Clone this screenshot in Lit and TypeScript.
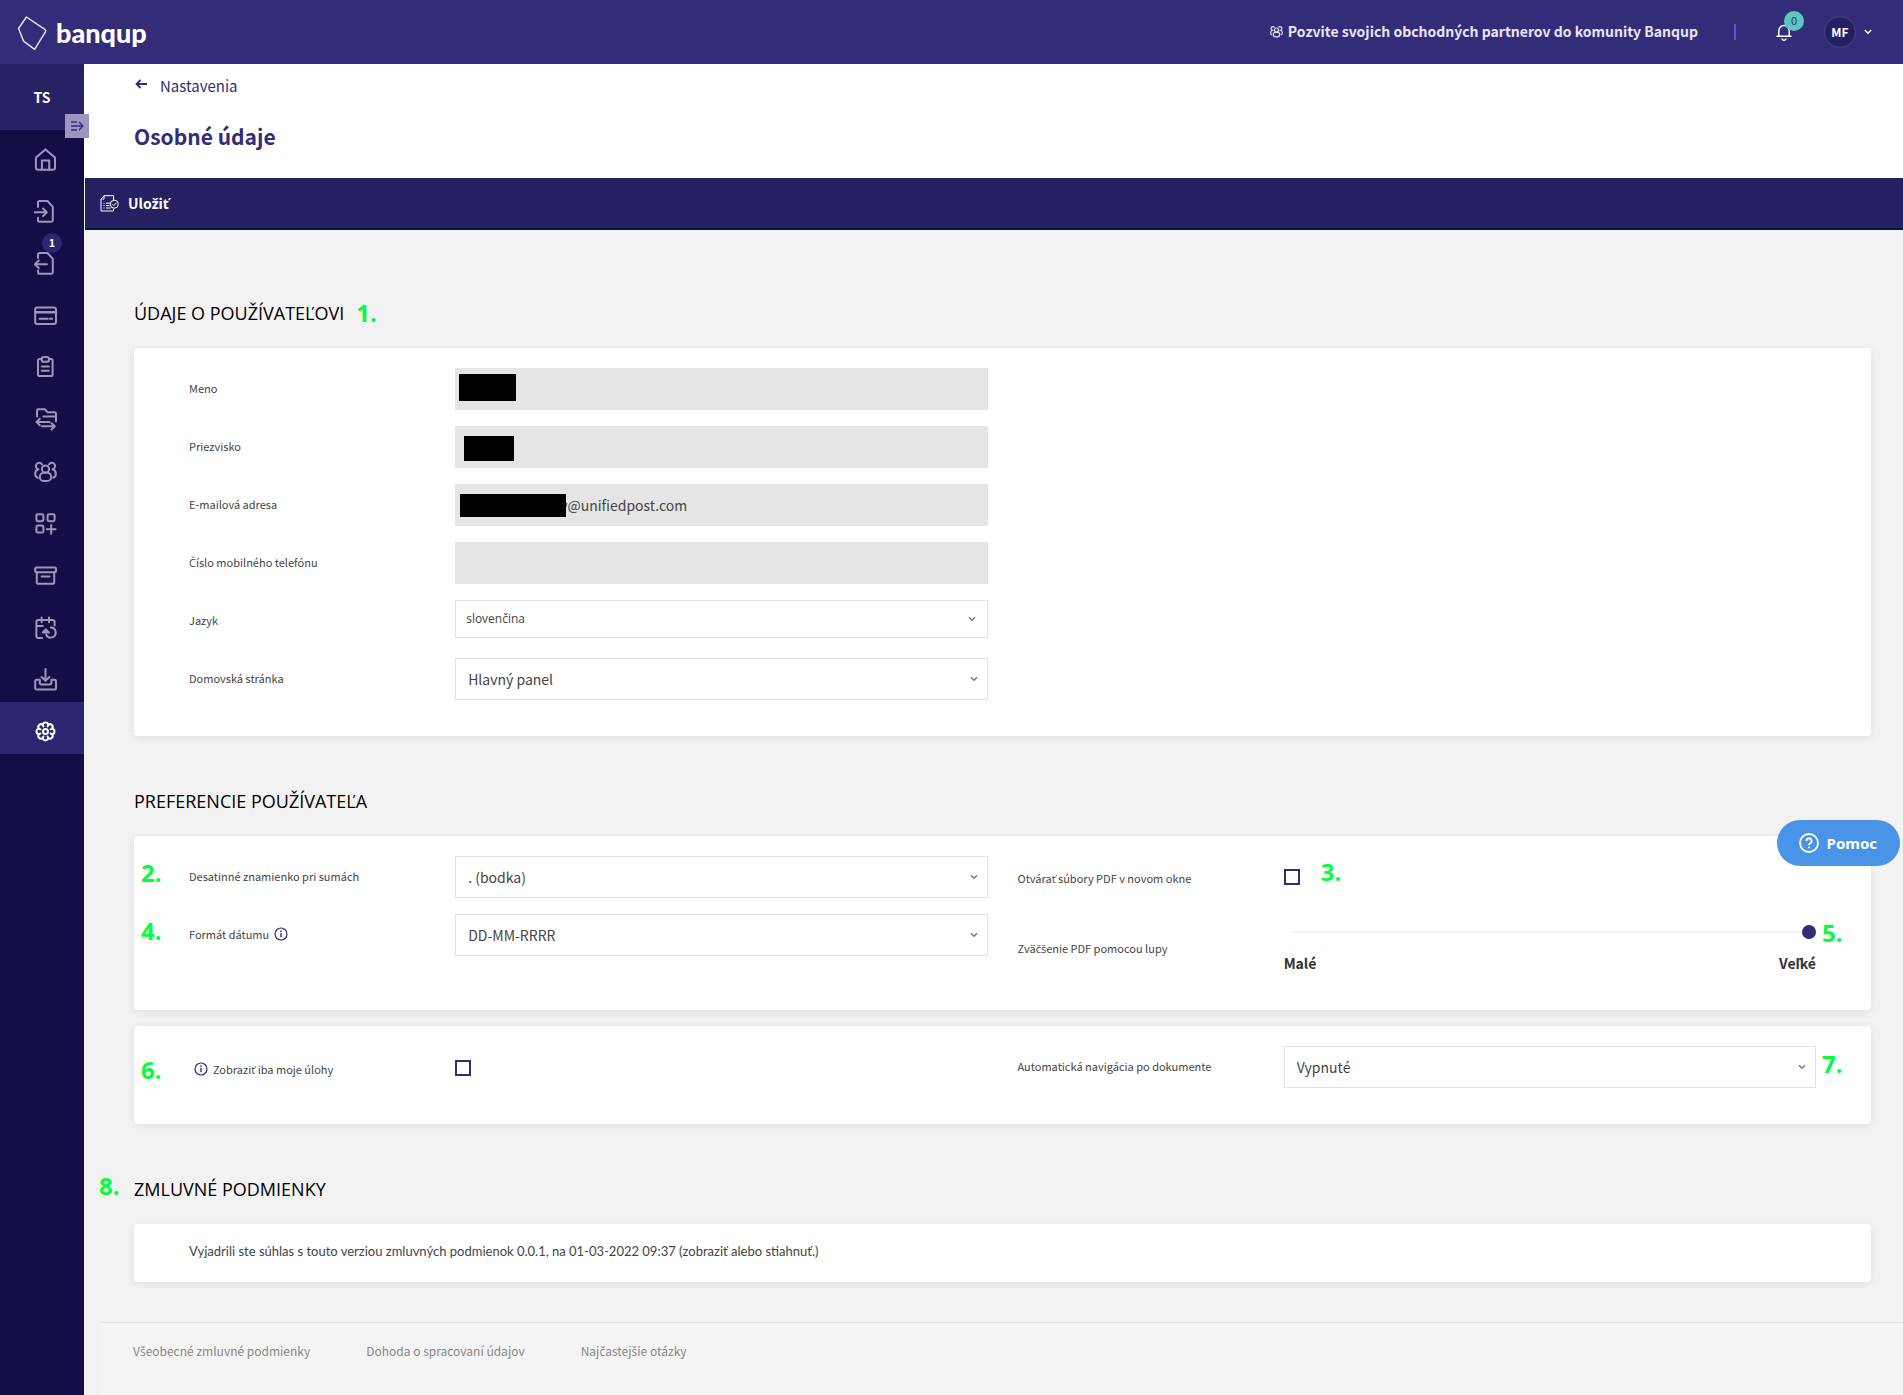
import { LitElement, html, css, svg, nothing, TemplateResult } from "lit";
import { customElement } from "lit/decorators.js";

type Shape = ReturnType<typeof svg>;

interface NavItem {
  label: string;
  icon: Shape;
  badge?: number;
  active?: boolean;
}

const NAV: NavItem[] = [
  {
    label: "Domov",
    icon: svg`<path d="M1.9 9.6 11.5 1.4 21 9.6V19.6a2.2 2.2 0 0 1-2.2 2.2H4.1a2.2 2.2 0 0 1-2.2-2.2Z"/><path d="M7.9 21.6V12.4h7.3v9.2"/>`,
  },
  {
    label: "Prijaté",
    icon: svg`<path d="M4 7V2.6a1.6 1.6 0 0 1 1.6-1.6H13.500l5.300 5.800V20.200a1.600 1.600 0 0 1-1.600 1.600H5.600a1.600 1.600 0 0 1-1.600-1.600V17.800"/><path d="M.8 12.300H12.800M9 8.500l3.800 3.800L9 16.100"/>`,
  },
  {
    label: "Odoslané",
    badge: 1,
    icon: svg`<path d="M4 6V2.600A1.600 1.600 0 0 1 5.600 1H13.500l5.300 5.800V20.200a1.600 1.600 0 0 1-1.600 1.600H5.600a1.600 1.600 0 0 1-1.600-1.600V18.500"/><path d="M13 12.300H1M4.800 8.500 1 12.300l3.800 3.800"/>`,
  },
  {
    label: "Platby",
    icon: svg`<rect x="1.200" y="3.400" width="20.800" height="16.600" rx="2"/><path d="M1.200 8.200h20.800" stroke-width="2.600"/><path d="M5.500 14.800h8M15.600 14.800h2.600"/>`,
  },
  {
    label: "Úlohy",
    icon: svg`<path d="M7.500 3H5.600A1.600 1.600 0 0 0 4 4.600V18.400A1.600 1.600 0 0 0 5.600 20H17a1.600 1.600 0 0 0 1.600-1.600V4.600A1.600 1.600 0 0 0 17 3h-1.900"/><rect x="7.600" y="1" width="7.500" height="4.800" rx="2.400"/><path d="M7.800 10.500h7M7.800 14.800h7"/>`,
  },
  {
    label: "Výmena",
    icon: svg`<path d="M3 8.500V2.500A1.200 1.200 0 0 1 4.200 1.300H11l2.600 3h7.200a1.200 1.200 0 0 1 1.200 1.200V13.500"/><path d="M9.500 8.600H22M2.500 14h13M5.800 10.800 2.500 14l3.300 3.200M8 18.300h12.800M17.500 15.200l3.300 3.100-3.300 3.200"/>`,
  },
  {
    label: "Partneri",
    icon: svg`<circle cx="11.500" cy="9" r="3.600"/><rect x="5.800" y="12.800" width="11.400" height="8.200" rx="4.100"/><path d="M8 4.400A3.300 3.300 0 1 0 4.400 9.300C2.300 9.900 1.200 11.600 1.200 14c0 2 .9 3.300 2.600 3.700M15 4.400a3.300 3.300 0 1 1 3.600 4.900c2.100.6 3.200 2.300 3.200 4.700 0 2-.9 3.300-2.600 3.700"/>`,
  },
  {
    label: "Aplikácie",
    icon: svg`<rect x="2.400" y="2.200" width="7" height="7" rx="1.400"/><rect x="13.600" y="2.200" width="7" height="7" rx="1.400"/><rect x="2.400" y="13.600" width="7" height="7" rx="1.400"/><path d="M17.200 13v8.800M12.800 17.300h8.800"/>`,
  },
  {
    label: "Archív",
    icon: svg`<rect x="1.200" y="3.400" width="20.800" height="4.800" rx="1.200"/><path d="M2.800 8.200V18.200a1.600 1.600 0 0 0 1.600 1.600H18.600a1.600 1.600 0 0 0 1.600-1.600V8.200M7.600 12.600h8"/>`,
  },
  {
    label: "Plánovanie",
    icon: svg`<path d="M8 22H4.200A1.800 1.800 0 0 1 2.400 20.200V5.800A1.800 1.800 0 0 1 4.200 4h14.600A1.800 1.800 0 0 1 20.600 5.800V9.500M2.400 10h6.400M7.600 1.600v4.600M15 1.600v4.600"/><path d="M12.200 18.800a5 5 0 1 0 4.600-7.200"/><path d="M8.800 16.400l3-3 3.200 3.200Z" fill="currentColor"/>`,
  },
  {
    label: "Stiahnuť",
    icon: svg`<path d="M11.500 1v11.600M7.600 9l3.900 3.800L15.400 9"/><path d="M5.800 11.800H2.800A1.600 1.600 0 0 0 1.200 13.400V20a1.600 1.600 0 0 0 1.600 1.600H20.400A1.600 1.600 0 0 0 22 20V13.400a1.600 1.600 0 0 0-1.600-1.600h-3v3a1.600 1.600 0 0 1-1.600 1.600H7.400a1.600 1.600 0 0 1-1.600-1.600Z"/>`,
  },
  {
    label: "Nastavenia",
    active: true,
    icon: svg`<path d="M8.710 4.660A2.850 2.850 0 0 1 14.290 4.660A2.850 2.850 0 0 1 18.240 8.610A2.850 2.850 0 0 1 18.240 14.190A2.850 2.850 0 0 1 14.290 18.140A2.850 2.850 0 0 1 8.710 18.140A2.850 2.850 0 0 1 4.760 14.190A2.850 2.850 0 0 1 4.760 8.610A2.850 2.850 0 0 1 8.710 4.660Z"/><path d="M8.710 4.660l.7 1.700M14.290 4.660l-.7 1.700M18.240 8.610l-1.700.7M18.240 14.190l-1.700-.7M14.290 18.140l-.7-1.700M8.710 18.140l.7-1.700M4.760 14.190l1.700-.7M4.760 8.610l1.700.7"/><circle cx="11.500" cy="11.400" r="2.500"/>`,
  },
];

const FOOTER_LINKS = [
  "Všeobecné zmluvné podmienky",
  "Dohoda o spracovaní údajov",
  "Najčastejšie otázky",
];

const INFO = html`<svg class="info" viewBox="0 0 14 14" role="img" aria-label="Informácia">
  <circle cx="7" cy="7" r="6" fill="none" stroke="currentColor" stroke-width="1.200" />
  <path d="M7 6v4.200M7 3.600v1.400" stroke="currentColor" stroke-width="1.400" />
</svg>`;

const CHEVRON = html`<svg class="chevron" viewBox="0 0 8 6" aria-hidden="true">
  <path d="M1 1.200 4 4.200 7 1.200" fill="none" stroke="currentColor" stroke-width="1.400" />
</svg>`;

/* The interface face has no letters with a caron; those come from the second face. */
function slovak(text: string) {
  const parts = text.split(/([čďľňšťžČĎĽŇŠŤŽ]+)/);
  return html`<span>${parts.map((part, i) => (i % 2 ? html`<span class="caron">${part}</span>` : part))}</span>`;
}

@customElement("app-root")
export class AppRoot extends LitElement {
  static styles = css`
    :host {
      display: block;
      --brand: #332c79;
      --ui: "Noto Sans CJK SC", "Noto Sans", sans-serif;
      --alt: "Open Sans", "Noto Sans", sans-serif;
      font: 14px/20px var(--ui);
      color: #444;
    }
    * {
      box-sizing: border-box;
    }
    button,
    input,
    select {
      font: inherit;
      color: inherit;
      margin: 0;
      border: 0;
      border-radius: 0;
      padding: 0;
      background: none;
    }
    a {
      color: inherit;
      text-decoration: none;
    }
    .caron {
      font-family: var(--alt);
      line-height: 1;
    }
    .page {
      min-height: 100vh;
      display: flex;
      flex-direction: column;
    }

    /* top bar */
    .topbar {
      height: 64px;
      display: flex;
      align-items: center;
      background: var(--brand);
      color: #fff;
      padding: 0 31px 0 16px;
    }
    .brand {
      display: flex;
      align-items: center;
      gap: 8px;
      padding-top: 2px;
      font: 900 27px/32px Lato, sans-serif;
    }
    .brand svg {
      width: 32px;
      height: 36px;
    }
    .invite {
      margin-left: auto;
      display: flex;
      align-items: center;
      gap: 5px;
      padding-bottom: 2px;
      font-weight: 700;
      color: #e8e6f4;
    }
    .invite svg {
      width: 13px;
      height: 13px;
    }
    .divider {
      width: 2px;
      height: 16px;
      margin: 0 40px 0 36px;
      background: #6358c6;
    }
    .bell {
      position: relative;
      display: flex;
      margin-right: 32px;
    }
    .bell svg {
      width: 16px;
      height: 18px;
    }
    .count {
      position: absolute;
      left: 8px;
      bottom: 10px;
      width: 20px;
      height: 20px;
      border-radius: 50%;
      background: #5fc6bd;
      color: #332c79;
      font-size: 11px;
      line-height: 19px;
      text-align: center;
    }
    .user {
      display: flex;
      align-items: center;
      gap: 8px;
      color: #fff;
    }
    .avatar {
      width: 32px;
      height: 32px;
      border: 1px solid #4b448c;
      border-radius: 50%;
      background: #252061;
      font-size: 12px;
      line-height: 29px;
      font-weight: 700;
      text-align: center;
    }

    /* side bar */
    .body {
      flex: 1;
      display: flex;
    }
    .side {
      position: relative;
      flex: none;
      width: 84px;
      background: #130e45;
      color: #9d97c0;
    }
    .company {
      height: 66px;
      background: #272263;
      color: #fff;
      font-weight: 700;
      line-height: 66px;
      text-align: center;
    }
    .toggle {
      position: absolute;
      left: 65px;
      top: 50px;
      width: 24px;
      height: 24px;
      display: grid;
      place-items: center;
      background: #9d97c0;
      color: var(--brand);
    }
    .toggle svg {
      width: 14px;
      height: 12px;
    }
    .nav {
      display: block;
    }
    .nav a {
      position: relative;
      display: block;
      height: 52px;
      padding: 18px 0 0 34px;
    }
    .nav a.active {
      background: #2d2670;
      color: #fff;
    }
    .nav svg {
      display: block;
      width: 24px;
      height: 24px;
      fill: none;
      stroke: currentColor;
      stroke-width: 2;
      stroke-linejoin: round;
      stroke-linecap: round;
    }
    .nav .badge {
      position: absolute;
      left: 42px;
      top: -1px;
      width: 20px;
      height: 20px;
      border-radius: 50%;
      background: #2d2670;
      color: #fff;
      font-size: 11px;
      line-height: 19px;
      font-weight: 700;
      text-align: center;
    }

    /* page head */
    .main {
      flex: 1;
      min-width: 0;
      display: flex;
      flex-direction: column;
      background: #f2f2f2;
    }
    .head {
      height: 114px;
      padding: 12px 50px 0;
      background: #fff;
      color: var(--brand);
    }
    .back {
      display: flex;
      align-items: center;
      gap: 13px;
      font-size: 15px;
      line-height: 20px;
    }
    .back svg {
      width: 13px;
      height: 14px;
    }
    h1 {
      margin: 24px 0 0;
      font-size: 21px;
      line-height: 32px;
      font-weight: 700;
    }
    .toolbar {
      height: 52px;
      margin-left: 1px;
      padding: 0 15px;
      display: flex;
      align-items: center;
      background: #252061;
      border-bottom: 2px solid #130e45;
      color: #fff;
    }
    .save {
      display: flex;
      align-items: center;
      gap: 9px;
      font-weight: 700;
    }
    .save svg {
      width: 19px;
      height: 17px;
    }

    /* sections */
    .content {
      padding: 71px 32px 40px 50px;
      display: flex;
      flex-direction: column;
      gap: 53px;
    }
    h2 {
      position: relative;
      width: max-content;
      margin: 0 0 23px;
      font: 400 18px/24px var(--alt);
      color: #000;
    }
    .stack {
      display: flex;
      flex-direction: column;
      gap: 16px;
    }
    .card {
      padding: 20px 55px 36px;
      border-radius: 4px;
      background: #fff;
      box-shadow: 0 2px 10px rgba(0, 0, 0, 0.08);
      display: grid;
      grid-template-columns: 1fr 1fr;
      gap: 30px;
      font-size: 11px;
      align-items: start;
    }
    .col {
      display: flex;
      flex-direction: column;
      gap: 16px;
    }
    .row {
      position: relative;
      display: grid;
      grid-template-columns: 1fr 2fr;
      min-height: 42px;
      align-items: center;
    }
    .row.tick {
      padding-top: 2px;
    }
    .name {
      display: flex;
      align-items: center;
      gap: 5px;
      padding-bottom: 2px;
    }
    .row.tick .name,
    .row.pdf .name {
      padding: 2px 0 0;
    }
    .row.tick .name {
      padding-left: 5px;
    }
    .info {
      flex: none;
      width: 14px;
      height: 14px;
      color: var(--brand);
    }
    .field {
      position: relative;
      height: 42px;
      font-size: 14px;
    }
    .field input {
      width: 100%;
      height: 100%;
      padding: 0 12px;
      background: #e5e5e5;
    }
    .field input.masked {
      padding-left: 105px;
    }
    .mask {
      position: absolute;
      background: #000;
    }
    .mask.first {
      left: 4px;
      top: 6px;
      width: 57px;
      height: 27px;
    }
    .mask.last {
      left: 9px;
      top: 10px;
      width: 50px;
      height: 25px;
    }
    .mask.mail {
      left: 5px;
      top: 10px;
      width: 106px;
      height: 23px;
    }
    .select {
      display: grid;
      height: 42px;
      font-size: 14px;
      align-items: center;
    }
    .select.small {
      height: 38px;
      font: 12px/20px var(--alt);
      align-self: start;
    }
    .select > * {
      grid-area: 1 / 1;
    }
    .select select {
      appearance: none;
      width: 100%;
      height: 100%;
      padding: 0 12px;
      border: 1px solid #e3e3e3;
      background: #fff;
    }
    .select.small select {
      padding: 0 10px;
    }
    .select .chevron {
      justify-self: end;
      margin-right: 10px;
      pointer-events: none;
      color: #777;
    }
    .select.small .chevron {
      margin-right: 12px;
    }
    .chevron {
      width: 8px;
      height: 6px;
    }
    .check {
      appearance: none;
      width: 16px;
      height: 16px;
      border: 2px solid var(--brand);
      background: #fff;
    }
    .check:checked {
      background: var(--brand);
    }
    .row.zoom {
      margin-top: 9px;
    }
    .scale {
      display: flex;
      flex-direction: column;
      gap: 12px;
      padding-bottom: 1px;
    }
    .scale input {
      appearance: none;
      width: 100%;
      height: 18px;
      background: linear-gradient(#f2f2f2, #f2f2f2) center / calc(100% - 16px) 2px no-repeat;
    }
    .scale input::-webkit-slider-runnable-track {
      height: 14px;
    }
    .scale input::-webkit-slider-thumb {
      appearance: none;
      width: 14px;
      height: 14px;
      border-radius: 50%;
      background: var(--brand);
    }
    .ends {
      display: flex;
      justify-content: space-between;
      font-size: 14px;
      font-weight: 700;
      color: #333;
    }
    .terms {
      display: block;
      padding: 17px 55px 21px;
      font: 13px/20px Lato, sans-serif;
    }
    .terms p {
      margin: 0;
    }

    /* numbered call-outs lying over the form */
    .mark {
      position: absolute;
      font: 700 24px/32px var(--alt);
      color: #00ff40;
    }
    .mark.before {
      left: -48px;
      top: 1px;
    }
    .row.tick .mark.before {
      top: 8px;
    }
    .mark.after {
      left: calc(100% + 6px);
      top: 2px;
    }
    .row.zoom .mark.after {
      top: -6px;
    }
    .mark.box {
      left: calc(33.333% + 37px);
      top: 0;
    }
    .mark.title-end {
      left: calc(100% + 12px);
      top: -4px;
    }
    .mark.title-start {
      left: -35px;
      top: -7px;
    }

    .foot {
      flex: 1;
      margin-left: 16px;
      padding: 18px 33px;
      display: flex;
      align-items: flex-start;
      gap: 56px;
      border-top: 1px solid #e3e3e3;
      background: #f4f4f4;
      color: #888;
      font-size: 12px;
    }
    .help {
      position: fixed;
      right: 3px;
      top: 820px;
      height: 46px;
      padding: 0 23px 0 22px;
      display: flex;
      align-items: center;
      gap: 8px;
      border-radius: 23px;
      background: #4a94e8;
      color: #fff;
      font: 700 15px/20px "Noto Sans", sans-serif;
    }
    .help svg {
      width: 20px;
      height: 20px;
    }
  `;

  private mark(n: number, place: string) {
    return html`<span class="mark ${place}">${n}.</span>`;
  }

  private text(id: string, label: string, mask?: string, value = "") {
    return html`<div class="row">
      <label class="name" for=${id}>${slovak(label)}</label>
      <div class="field">
        <input id=${id} class=${value ? "masked" : "plain"} type="text" readonly .value=${value} />
        ${mask ? html`<span class="mask ${mask}"></span>` : nothing}
      </div>
    </div>`;
  }

  private choice(id: string, label: string, value: string, extra: { small?: boolean; info?: boolean; mark?: TemplateResult } = {}) {
    return html`<div class="row">
      <label class="name" for=${id}>${slovak(label)}${extra.info ? INFO : nothing}</label>
      <div class="select ${extra.small ? "small" : ""}">
        <select id=${id}>
          <option>${value}</option>
        </select>
        ${CHEVRON}
      </div>
      ${extra.mark ?? nothing}
    </div>`;
  }

  render() {
    return html`<div class="page">
      <header class="topbar">
        <a class="brand" href="#">
          <svg viewBox="0 0 32 36" aria-hidden="true">
            <path d="M10.400 2 28.800 14.300a2 2 0 0 1 .6 2.600L18.600 34.300 7.600 26.200 2.600 13.500Z" fill="none" stroke="#e4e2f0" stroke-width="1.500" stroke-linejoin="round" />
          </svg>
          <span>banqup</span>
        </a>
        <a class="invite" href="#">
          <svg viewBox="0 0 23 23" fill="none" stroke="currentColor" stroke-width="2" aria-hidden="true">${NAV[6].icon}</svg>
          Pozvite svojich obchodných partnerov do komunity Banqup
        </a>
        <span class="divider"></span>
        <button class="bell" aria-label="Oznámenia">
          <svg viewBox="0 0 16 18" fill="none" stroke="#fff" stroke-width="1.500" aria-hidden="true">
            <path d="M1 13.200h14M2.800 13V7.800A5.200 5.200 0 0 1 13.200 7.800V13M6 16a2.200 2 0 0 0 4 0" stroke-linecap="round" />
          </svg>
          <span class="count">0</span>
        </button>
        <button class="user" aria-label="Používateľ MF">
          <span class="avatar">MF</span>
          <svg class="chevron" viewBox="0 0 8 6" fill="none" stroke="currentColor" stroke-width="1.400" aria-hidden="true"><path d="M.8 1 4 4.300 7.200 1" /></svg>
        </button>
      </header>

      <div class="body">
        <aside class="side">
          <div class="company">TS</div>
          <button class="toggle" aria-label="Rozbaliť ponuku">
            <svg viewBox="0 0 14 12" fill="none" stroke="currentColor" stroke-width="1.400" aria-hidden="true">
              <path d="M1 2h6M1 6h12M1 10h6M9 2l4 4-4 4" />
            </svg>
          </button>
          <nav class="nav">
            ${NAV.map(
              (item) => html`<a href="#" class=${item.active ? "active" : ""} aria-label=${item.label}>
                <svg viewBox="0 0 24 24" aria-hidden="true">${item.icon}</svg>
                ${item.badge ? html`<span class="badge">${item.badge}</span>` : nothing}
              </a>`,
            )}
          </nav>
        </aside>

        <main class="main">
          <div class="head">
            <a class="back" href="#">
              <svg viewBox="0 0 13 14" fill="none" stroke="currentColor" stroke-width="1.800" aria-hidden="true"><path d="M13 5H3M6.500 1 2.500 5l4 4" /></svg>
              Nastavenia
            </a>
            <h1>Osobné údaje</h1>
          </div>
          <div class="toolbar">
            <button class="save">
              <svg viewBox="0 0 19 17" fill="none" stroke="currentColor" aria-hidden="true">
                <path d="M13.500 13.500v2.500H1V4l3-3.300h9.500V5M1 4h3V.7M3.500 8.200h1M6 8.200h4.500M3.500 10.600h1M6 10.600h3.500M3.500 13h1M6 13h4.500" />
                <circle cx="14.300" cy="9.200" r="4" />
                <path d="m12.500 9.200 1.400 1.400 2.400-2.700" />
              </svg>
              ${slovak("Uložiť")}
            </button>
          </div>

          <div class="content">
            <section>
              <h2>ÚDAJE O POUŽÍVATEĽOVI${this.mark(1, "title-end")}</h2>
              <div class="card">
                <div class="col">
                  ${this.text("first", "Meno", "first")} ${this.text("last", "Priezvisko", "last")}
                  ${this.text("mail", "E-mailová adresa", "mail", "y@unifiedpost.com")}
                  ${this.text("phone", "Číslo mobilného telefónu")}
                  ${this.choice("lang", "Jazyk", "slovenčina", { small: true })}
                  ${this.choice("home", "Domovská stránka", "Hlavný panel")}
                </div>
              </div>
            </section>

            <section>
              <h2>PREFERENCIE POUŽÍVATEĽA</h2>
              <div class="stack">
                <div class="card">
                  <div class="col">
                    ${this.choice("decimal", "Desatinné znamienko pri sumách", ". (bodka)", { mark: this.mark(2, "before") })}
                    ${this.choice("date", "Formát dátumu", "DD-MM-RRRR", { info: true, mark: this.mark(4, "before") })}
                  </div>
                  <div class="col">
                    <div class="row pdf">
                      <label class="name" for="pdf">${slovak("Otvárať súbory PDF v novom okne")}</label>
                      <input id="pdf" class="check" type="checkbox" />
                      ${this.mark(3, "box")}
                    </div>
                    <div class="row zoom">
                      <label class="name" for="zoom">${slovak("Zväčšenie PDF pomocou lupy")}</label>
                      <div class="scale">
                        <input id="zoom" type="range" min="0" max="100" .value=${"100"} />
                        <div class="ends"><span>Malé</span>${slovak("Veľké")}</div>
                      </div>
                      ${this.mark(5, "after")}
                    </div>
                  </div>
                </div>
                <div class="card">
                  <div class="row tick">
                    <label class="name" for="tasks">${INFO}${slovak("Zobraziť iba moje úlohy")}</label>
                    <input id="tasks" class="check" type="checkbox" />
                    ${this.mark(6, "before")}
                  </div>
                  ${this.choice("auto", "Automatická navigácia po dokumente", "Vypnuté", { mark: this.mark(7, "after") })}
                </div>
              </div>
            </section>

            <section>
              <h2>ZMLUVNÉ PODMIENKY${this.mark(8, "title-start")}</h2>
              <div class="card terms">
                <p>Vyjadrili ste súhlas s touto verziou zmluvných podmienok 0.0.1, na 01-03-2022 09:37 (<a href="#">zobraziť</a> alebo <a href="#">stiahnuť</a>.)</p>
              </div>
            </section>
          </div>

          <footer class="foot">${FOOTER_LINKS.map((t) => html`<a href="#">${slovak(t)}</a>`)}</footer>
        </main>
      </div>

      <button class="help">
        <svg viewBox="0 0 20 20" fill="none" stroke="currentColor" stroke-width="1.800" aria-hidden="true">
          <circle cx="10" cy="10" r="9" />
          <path d="M7.400 8a2.600 2.600 0 1 1 3.800 2.300c-.8.400-1.200.9-1.200 1.700M10 13.400v1.800" />
        </svg>
        Pomoc
      </button>
    </div>`;
  }
}
